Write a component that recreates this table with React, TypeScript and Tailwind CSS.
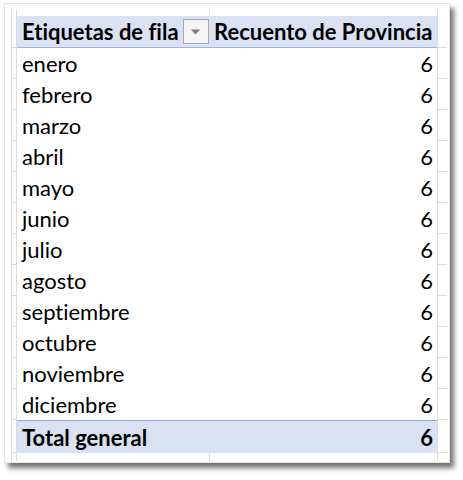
import React from "react";

const months = [
  "enero",
  "febrero",
  "marzo",
  "abril",
  "mayo",
  "junio",
  "julio",
  "agosto",
  "septiembre",
  "octubre",
  "noviembre",
  "diciembre",
];

const G = "border-[#dcdcdc]";

function LeftStrip({ tick = true }: { tick?: boolean }) {
  return (
    <div
      className={`w-[6px] shrink-0 border-l border-r ${G} ${tick ? "border-b" : ""}`}
    />
  );
}

function RightStrip({ tick = true }: { tick?: boolean }) {
  return (
    <div className={`w-[10px] shrink-0 border-l ${G} ${tick ? "border-b" : ""}`} />
  );
}

export default function App() {
  return (
    <div
      className="w-[463px] h-[480px] bg-white pt-[3px] pl-[4px] [font-variant-ligatures:none]"
      style={{ fontFamily: "Lato, 'Liberation Sans', sans-serif" }}
    >
      <div className="w-[446px] h-[460px] bg-white border border-[#e4e4e4] shadow-[4px_5px_5px_rgba(0,0,0,0.55)] pt-[6px] pl-[6px] overflow-hidden">
        {/* top strip */}
        <div className="flex h-[6px]">
          <div className={`w-[6px] shrink-0 border-l border-r ${G}`} />
          <div className={`w-[193px] shrink-0 border-r ${G}`} />
          <div className="w-[227px] shrink-0" />
          <RightStrip tick={false} />
        </div>
        {/* header */}
        <div className="flex h-[32px]">
          <LeftStrip />
          <div className="w-[420px] shrink-0 flex bg-[#d9e1f2] border-b border-[#9db5e0] text-[22px] font-bold text-black">
            <div className="w-[193px] shrink-0 flex items-center pl-[5px]">
              <span>Etiquetas de fila</span>
              <div className="ml-[4px] w-[26px] h-[25px] bg-[#f4f4f4] border border-[#a8a8a8] flex items-center justify-center">
                <svg width="11" height="6" viewBox="0 0 11 6">
                  <polygon points="1,0.5 10,0.5 5.5,5.5" fill="#7a7a7a" />
                </svg>
              </div>
            </div>
            <div className="w-[227px] shrink-0 flex items-center pl-[4px] whitespace-nowrap">
              Recuento de Provincia
            </div>
          </div>
          <RightStrip />
        </div>
        {/* data rows */}
        {months.map((m) => (
          <div key={m} className="flex h-[31px]">
            <LeftStrip />
            <div className="w-[420px] shrink-0 flex bg-white text-[22px] text-black">
              <div className="w-[193px] shrink-0 flex items-center pl-[5px]">{m}</div>
              <div className="w-[227px] shrink-0 flex items-center justify-end pr-[4px]">6</div>
            </div>
            <RightStrip />
          </div>
        ))}
        {/* total */}
        <div className="flex h-[33px]">
          <LeftStrip />
          <div className="w-[420px] shrink-0 flex bg-[#d9e1f2] border-t border-[#8eaadb] text-[22px] font-bold text-black">
            <div className="w-[193px] shrink-0 flex items-center pl-[5px]">Total general</div>
            <div className="w-[227px] shrink-0 flex items-center justify-end pr-[4px]">6</div>
          </div>
          <RightStrip />
        </div>
        {/* bottom strip */}
        <div className="flex h-[8px]">
          <div className={`w-[6px] shrink-0 border-l border-r ${G}`} />
          <div className={`w-[193px] shrink-0 border-r ${G}`} />
          <div className="w-[227px] shrink-0" />
          <RightStrip tick={false} />
        </div>
      </div>
    </div>
  );
}
